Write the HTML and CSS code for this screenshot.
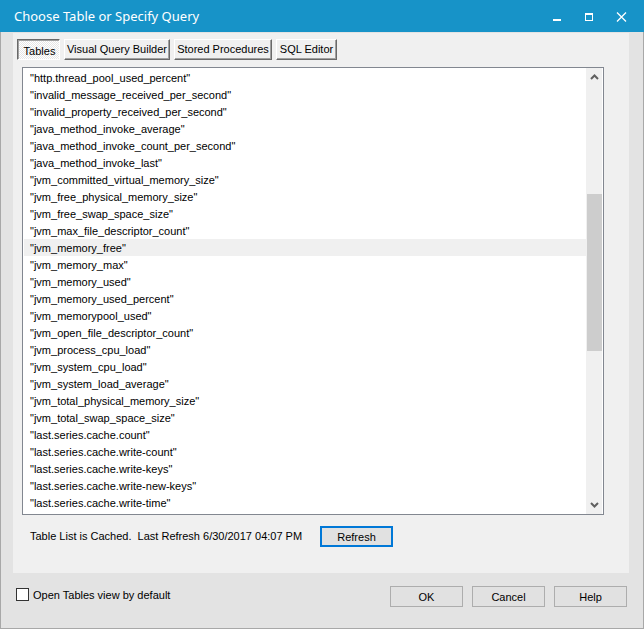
FILE: index.html
```html
<!DOCTYPE html>
<html>
<head>
<meta charset="utf-8">
<link rel="stylesheet" href="styles.css">
</head>
<body>
<div class="window">
  <div class="titlebar">
    <span class="title">Choose Table or Specify Query</span>
    <div class="controls">
      <svg class="ctl" width="30" height="32" viewBox="0 0 30 32"><rect x="14" y="19" width="8" height="2" fill="#fff"/></svg>
      <svg class="ctl" width="34" height="32" viewBox="0 0 34 32"><rect x="16.5" y="13.5" width="7" height="7" fill="none" stroke="#fff" stroke-width="1"/><rect x="16" y="13" width="8" height="2" fill="#fff"/></svg>
      <svg class="ctl" width="36" height="32" viewBox="0 0 36 32"><path d="M14 12.5 L23 21.5 M23 12.5 L14 21.5" stroke="#fff" stroke-width="1.3" fill="none"/></svg>
    </div>
  </div>
  <div class="client">
    <div class="panel">
      <div class="tabs">
        <div class="tab selected">Tables</div>
        <div class="tab w-vqb">Visual Query Builder</div>
        <div class="tab w-sp">Stored Procedures</div>
        <div class="tab w-sql">SQL Editor</div>
      </div>
      <div class="listbox">
        <div class="rows">
          <div class="row">"http.thread_pool_used_percent"</div>
          <div class="row">"invalid_message_received_per_second"</div>
          <div class="row">"invalid_property_received_per_second"</div>
          <div class="row">"java_method_invoke_average"</div>
          <div class="row">"java_method_invoke_count_per_second"</div>
          <div class="row">"java_method_invoke_last"</div>
          <div class="row">"jvm_committed_virtual_memory_size"</div>
          <div class="row">"jvm_free_physical_memory_size"</div>
          <div class="row">"jvm_free_swap_space_size"</div>
          <div class="row">"jvm_max_file_descriptor_count"</div>
          <div class="row hover">"jvm_memory_free"</div>
          <div class="row">"jvm_memory_max"</div>
          <div class="row">"jvm_memory_used"</div>
          <div class="row">"jvm_memory_used_percent"</div>
          <div class="row">"jvm_memorypool_used"</div>
          <div class="row">"jvm_open_file_descriptor_count"</div>
          <div class="row">"jvm_process_cpu_load"</div>
          <div class="row">"jvm_system_cpu_load"</div>
          <div class="row">"jvm_system_load_average"</div>
          <div class="row">"jvm_total_physical_memory_size"</div>
          <div class="row">"jvm_total_swap_space_size"</div>
          <div class="row">"last.series.cache.count"</div>
          <div class="row">"last.series.cache.write-count"</div>
          <div class="row">"last.series.cache.write-keys"</div>
          <div class="row">"last.series.cache.write-new-keys"</div>
          <div class="row">"last.series.cache.write-time"</div>
        </div>
        <div class="scrollbar">
          <svg class="arrow" width="15" height="17" viewBox="0 0 15 17"><path d="M4 11 L7.5 7.5 L11 11" stroke="#606060" stroke-width="2" fill="none"/></svg>
          <div class="track">
            <div class="thumb"></div>
          </div>
          <svg class="arrow" width="15" height="17" viewBox="0 0 15 17"><path d="M4 6 L7.5 9.5 L11 6" stroke="#606060" stroke-width="2" fill="none"/></svg>
        </div>
      </div>
      <div class="status">
        <span class="status-text">Table List is Cached.  Last Refresh 6/30/2017 04:07 PM</span>
        <div class="btn focused">Refresh</div>
      </div>
    </div>
    <div class="footer">
      <label class="check">
        <span class="box"></span>
        <span>Open Tables view by default</span>
      </label>
      <div class="buttons">
        <div class="btn">OK</div>
        <div class="btn">Cancel</div>
        <div class="btn">Help</div>
      </div>
    </div>
  </div>
</div>
</body>
</html>
```
FILE: styles.css
```css
* { box-sizing: border-box; }
html, body { margin: 0; padding: 0; }
body {
  width: 644px;
  height: 629px;
  overflow: hidden;
  font-family: "Liberation Sans", Arial, sans-serif;
  font-size: 11px;
  color: #000;
}
.window {
  width: 644px;
  height: 629px;
  display: flex;
  flex-direction: column;
}
.titlebar {
  height: 32px;
  flex: none;
  background: #1793c8;
  display: flex;
  align-items: center;
  justify-content: space-between;
}
.title {
  font-family: "Noto Sans", "Open Sans", sans-serif;
  font-size: 13px;
  color: #fff;
  padding-left: 14px;
  padding-bottom: 1px;
}
.controls {
  display: flex;
  padding-right: 5px;
}
.ctl { display: block; }
.client {
  flex: 1;
  background: #e3e3e3;
  border: 1px solid #a8a8a8;
  border-top: none;
  padding: 1px 14px 0 12px;
  display: flex;
  flex-direction: column;
}
.panel {
  height: 540px;
  background: #f0f0f0;
  padding: 6px 0 0 4px;
  display: flex;
  flex-direction: column;
}
.tabs {
  display: flex;
  gap: 4px;
  height: 21px;
}
.tab {
  height: 21px;
  width: 43px;
  display: flex;
  align-items: center;
  justify-content: center;
  background: #f0f0f0;
  border: 1px solid;
  border-color: #fff #696969 #696969 #fff;
  box-shadow: inset -1px -1px 0 #a0a0a0;
  padding-bottom: 1px;
}
.tab.selected {
  border-color: #696969 #fff #fff #696969;
  box-shadow: inset 1px 1px 0 #a0a0a0;
  background: repeating-conic-gradient(#ffffff 0 25%, #e6e6e6 0 50%) 0 0 / 2px 2px;
  padding: 2px 0 0 2px;
}
.w-vqb { width: 106px; }
.w-sp { width: 98px; }
.w-sql { width: 61px; }
.listbox {
  margin: 7px 0 0 5px;
  width: 582px;
  height: 448px;
  background: #fff;
  border: 1px solid #828790;
  display: flex;
  overflow: hidden;
}
.rows {
  flex: 1;
  padding: 1px 0 0 1px;
  overflow: hidden;
}
.row {
  height: 17px;
  line-height: 17px;
  padding: 1px 0 0 6px;
  white-space: nowrap;
}
.row.hover { background: #f0f0f0; }
.scrollbar {
  width: 17px;
  flex: none;
  display: flex;
  flex-direction: column;
  background: #f0f0f0;
  border-right: 1px solid #fff;
  border-left: 1px solid #f0f0f0;
}
.arrow { display: block; flex: none; }
.track {
  flex: 1;
  padding-top: 109px;
}
.thumb {
  height: 157px;
  background: #cdcdcd;
}
.status {
  display: flex;
  align-items: center;
  margin-top: 11px;
  padding-left: 13px;
}
.status-text {
  white-space: pre;
  width: 290px;
  padding-bottom: 2px;
}
.btn {
  width: 73px;
  height: 21px;
  display: flex;
  align-items: center;
  justify-content: center;
  background: #e1e1e1;
  border: 1px solid #adadad;
}
.btn.focused {
  border: 2px solid #0078d7;
}
.footer {
  flex: 1;
  display: flex;
  justify-content: space-between;
  align-items: flex-start;
  padding: 13px 2px 0 3px;
}
.check {
  display: flex;
  align-items: center;
  gap: 4px;
  margin-top: 2px;
}
.box {
  width: 13px;
  height: 13px;
  background: #fff;
  border: 1px solid #333;
}
.buttons {
  display: flex;
  gap: 9px;
}
.buttons .btn { width: 73px; height: 21px; }
```
